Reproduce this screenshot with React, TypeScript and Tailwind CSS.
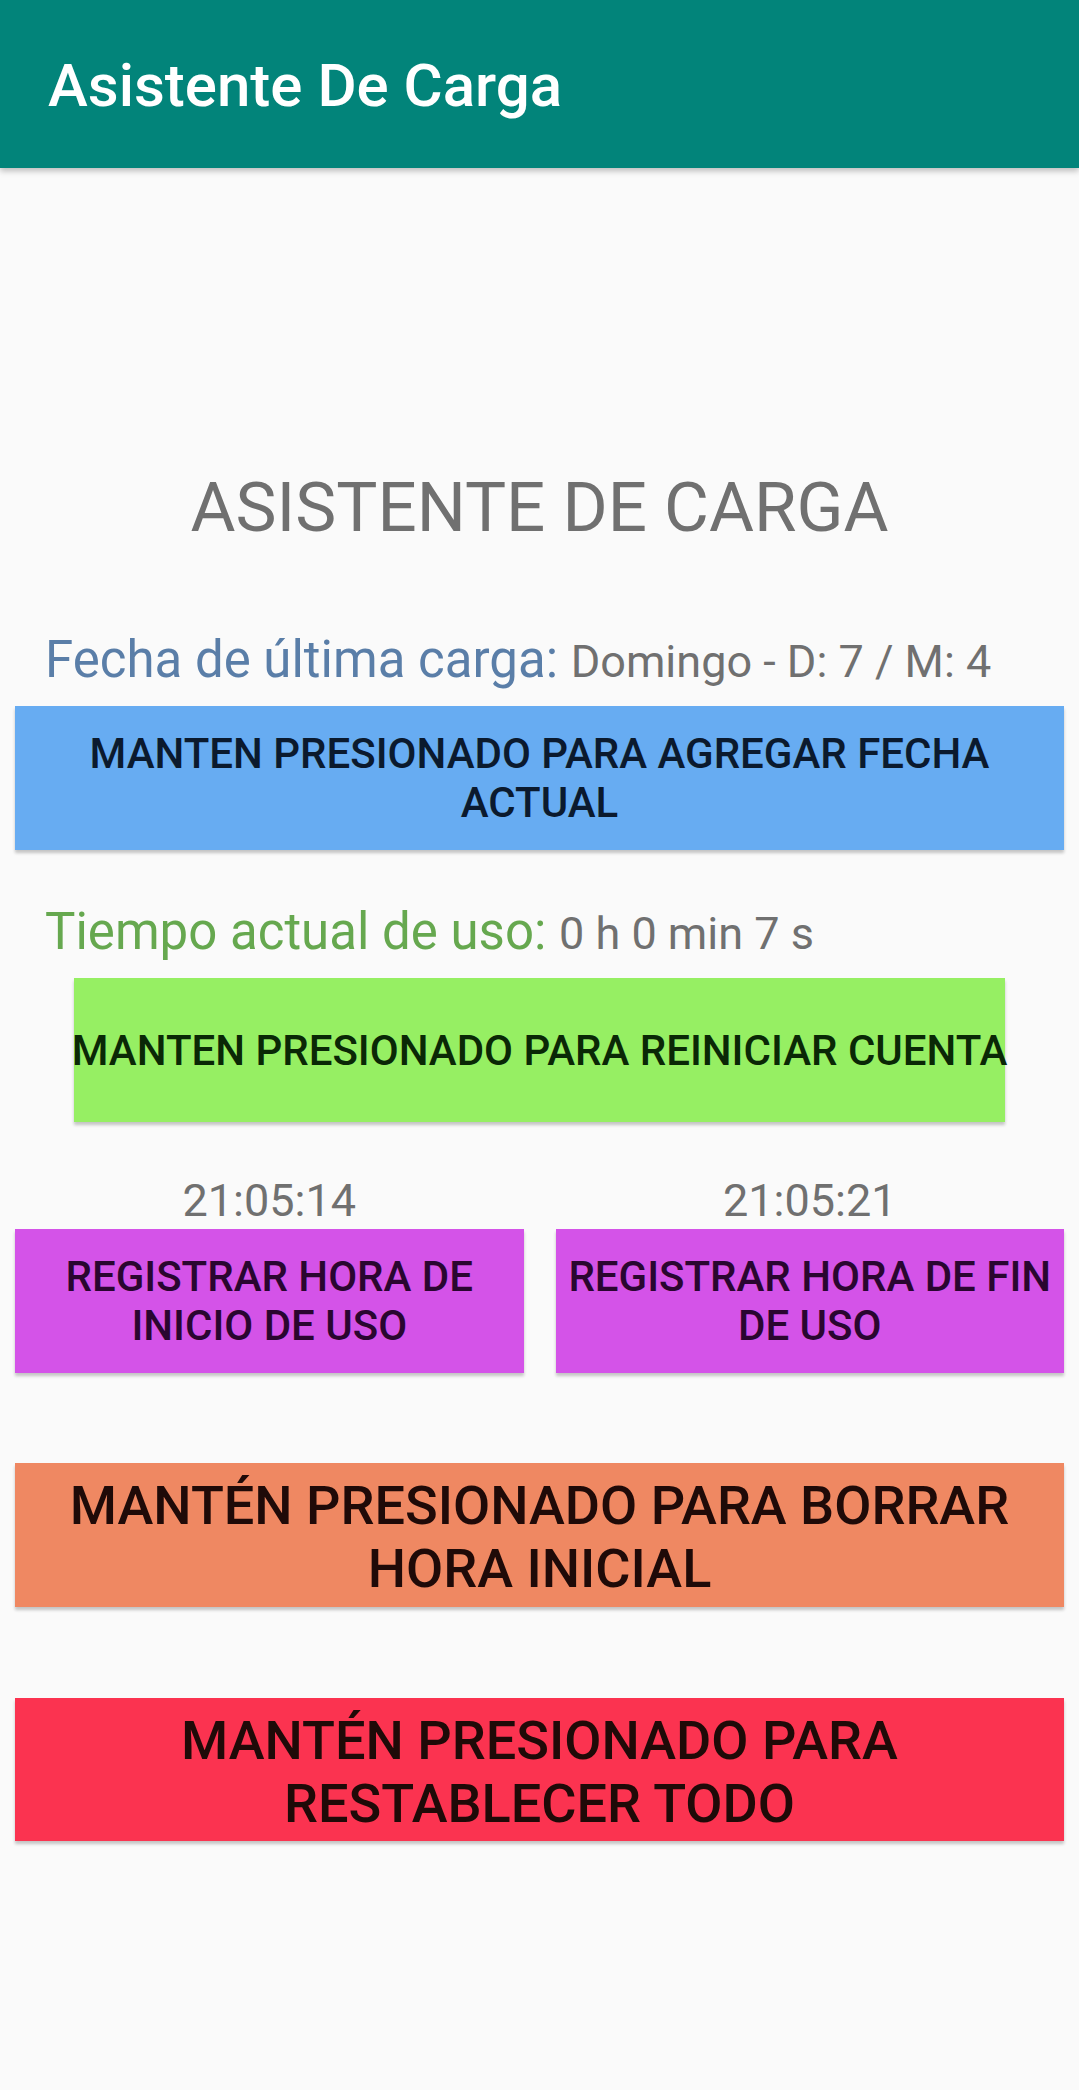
const font = { fontFamily: 'Roboto, "Noto Sans", sans-serif' }

type BtnProps = {
  lines: string[]
  className: string
}

function HoldButton({ lines, className }: BtnProps) {
  return (
    <div
      className={`flex flex-col items-center justify-center text-center shadow-[0_3px_3px_rgba(0,0,0,0.22)] ${className}`}
    >
      {lines.map((l) => (
        <span key={l} className="whitespace-nowrap">
          {l}
        </span>
      ))}
    </div>
  )
}

export default function App() {
  return (
    <div className="w-[1079px] h-[2090px] bg-[#fafafa] flex flex-col" style={font}>
      <header className="h-[168px] shrink-0 bg-[#02847a] shadow-[0_3px_6px_rgba(0,0,0,0.25)] flex items-center pl-[48px] relative z-10">
        <h1 className="text-[60px] font-medium text-white leading-none mt-[3px]">Asistente De Carga</h1>
      </header>

      <h2 className="mt-[305px] text-center text-[69px] leading-[69px] text-[#707070]">ASISTENTE DE CARGA</h2>

      <p className="mt-[93px] pl-[45px] leading-[50px] text-[51px] text-[#5a7ea8]">
        Fecha de última carga: <span className="text-[45px] text-[#707070]">Domingo - D: 7 / M: 4</span>
      </p>

      <div className="mt-[19px] px-[15px]">
        <HoldButton
          lines={['MANTEN PRESIONADO PARA AGREGAR FECHA', 'ACTUAL']}
          className="h-[144px] bg-[#67acf2] text-[42px] leading-[49px] font-medium text-[#0b1a2e]"
        />
      </div>

      <p className="mt-[57px] pl-[45px] leading-[50px] text-[51px] text-[#66a84f]">
        Tiempo actual de uso: <span className="text-[45px] text-[#707070]">0 h 0 min 7 s</span>
      </p>

      <div className="mt-[19px] px-[74px]">
        <HoldButton
          lines={['MANTEN PRESIONADO PARA REINICIAR CUENTA']}
          className="h-[144px] bg-[#96ef63] text-[42px] leading-[49px] font-medium text-[#0a2806]"
        />
      </div>

      <div className="mt-[56px] px-[15px] grid grid-cols-2 gap-x-[32px]">
        <div className="flex flex-col">
          <p className="text-center text-[45px] leading-[45px] text-[#707070]">21:05:14</p>
          <HoldButton
            lines={['REGISTRAR HORA DE', 'INICIO DE USO']}
            className="mt-[6px] h-[144px] bg-[#d453e8] text-[42px] leading-[49px] font-medium text-[#2a0630]"
          />
        </div>
        <div className="flex flex-col">
          <p className="text-center text-[45px] leading-[45px] text-[#707070]">21:05:21</p>
          <HoldButton
            lines={['REGISTRAR HORA DE FIN', 'DE USO']}
            className="mt-[6px] h-[144px] bg-[#d453e8] text-[42px] leading-[49px] font-medium text-[#2a0630]"
          />
        </div>
      </div>

      <div className="mt-[90px] px-[15px]">
        <HoldButton
          lines={['MANTÉN PRESIONADO PARA BORRAR', 'HORA INICIAL']}
          className="h-[144px] pt-[4px] bg-[#ef8862] text-[54px] leading-[63px] font-medium text-[#1f0a08]"
        />
      </div>

      <div className="mt-[91px] px-[15px]">
        <HoldButton
          lines={['MANTÉN PRESIONADO PARA', 'RESTABLECER TODO']}
          className="h-[143px] pt-[4px] bg-[#fb3350] text-[54px] leading-[63px] font-medium text-[#1f0a08]"
        />
      </div>
    </div>
  )
}
